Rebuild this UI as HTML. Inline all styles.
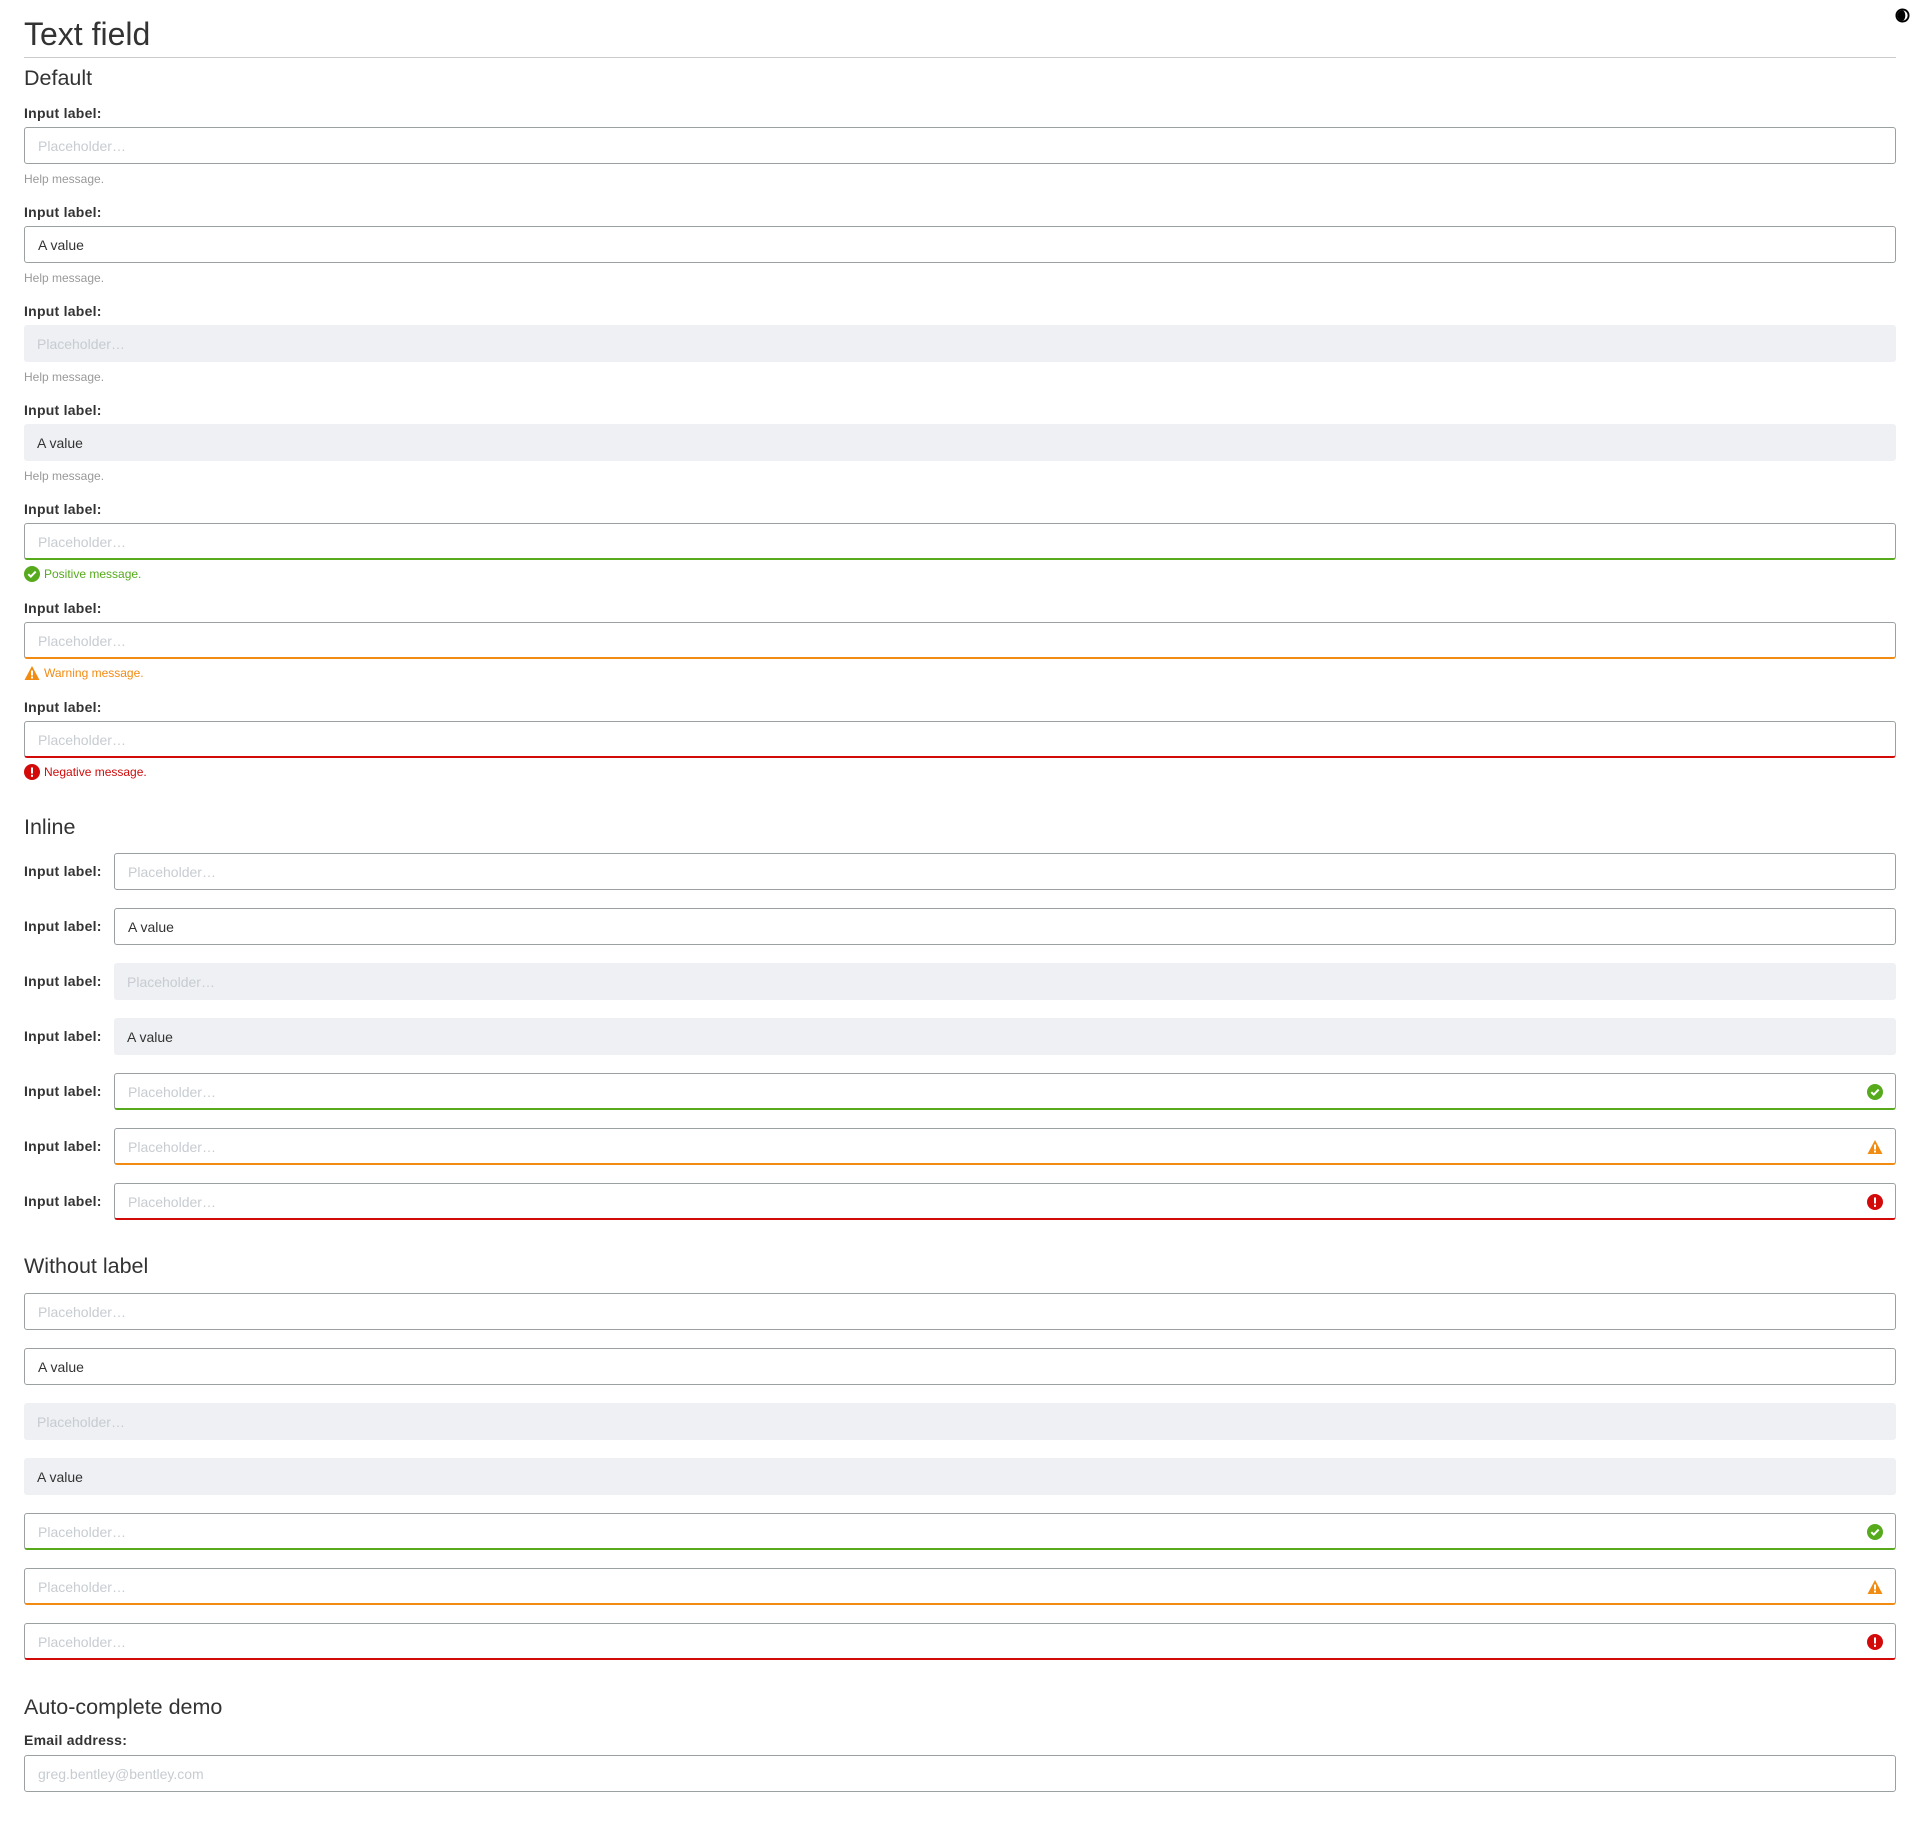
<!DOCTYPE html>
<html><head><meta charset="utf-8">
<style>
html,body{margin:0;padding:0;background:#fff;}
body{width:1920px;height:1831px;position:relative;font-family:"Liberation Sans",Arial,sans-serif;color:#333;overflow:hidden;}
.a{position:absolute;}
h1{position:absolute;margin:0;left:24px;top:14px;font-size:32px;font-weight:normal;color:#333;line-height:40px;}
.hr{position:absolute;left:24px;width:1872px;top:57px;height:1px;background:#ccc;}
h2{position:absolute;margin:0;left:24px;font-size:21.5px;font-weight:normal;color:#333;line-height:28px;}
.lbl{position:absolute;left:24px;font-size:14px;font-weight:bold;color:#333;line-height:18px;letter-spacing:0.25px;}
.in{position:absolute;left:24px;width:1872px;height:37px;box-sizing:border-box;border:1px solid #9ba0a3;border-radius:3px;background:#fff;font-size:14px;line-height:37px;padding-left:13px;color:#c7ccd1;}
.in.v{color:#333;}
.in.d{border:none;background:#eef0f3;line-height:39px;padding-left:13px;}
.in.inl{left:114px;width:1782px;}
.in.g{border-bottom:2px solid #56aa1c;}
.in.o{border-bottom:2px solid #f18b12;}
.in.r{border-bottom:2px solid #d30a0a;}
.help{position:absolute;left:24px;font-size:12px;color:#999;line-height:14px;}
.msg{position:absolute;left:24px;font-size:12px;line-height:16px;display:flex;align-items:center;}
.msg svg{margin-right:4px;}
.ic{position:absolute;right:12px;top:10px;}
</style></head><body>
<h1>Text field</h1>
<svg class="a" style="left:1895px;top:8px" width="15" height="15" viewBox="0 0 16 16"><circle cx="8" cy="8" r="6.5" fill="#fff" stroke="#000" stroke-width="2"/><path d="M8 2.5A5.5 5.5 0 0 0 8 13.5A3 5.5 0 0 0 8 2.5Z" fill="#000"/></svg>
<div class="hr"></div>
<h2 style="top:64px">Default</h2>

<div class="lbl" style="top:104px">Input label:</div>
<div class="in" style="top:127px">Placeholder…</div>
<div class="help" style="top:172px">Help message.</div>

<div class="lbl" style="top:203px">Input label:</div>
<div class="in v" style="top:226px">A value</div>
<div class="help" style="top:271px">Help message.</div>

<div class="lbl" style="top:302px">Input label:</div>
<div class="in d" style="top:325px">Placeholder…</div>
<div class="help" style="top:370px">Help message.</div>

<div class="lbl" style="top:401px">Input label:</div>
<div class="in d v" style="top:424px">A value</div>
<div class="help" style="top:469px">Help message.</div>

<div class="lbl" style="top:500px">Input label:</div>
<div class="in g" style="top:523px">Placeholder…</div>
<div class="msg" style="top:566px;color:#56aa1c"><svg width="16" height="16" viewBox="0 0 16 16"><circle cx="8" cy="8" r="8" fill="#56aa1c"/><path d="M4.3 8.2l2.5 2.4 4.9-5" fill="none" stroke="#fff" stroke-width="2"/></svg>Positive message.</div>

<div class="lbl" style="top:599px">Input label:</div>
<div class="in o" style="top:622px">Placeholder…</div>
<div class="msg" style="top:665px;color:#f18b12"><svg width="16" height="16" viewBox="0 0 16 16"><path d="M8 1L15.5 15H.5Z" fill="#f18b12"/><rect x="7" y="5.5" width="2" height="5" fill="#fff"/><rect x="7" y="11.5" width="2" height="2" fill="#fff"/></svg>Warning message.</div>

<div class="lbl" style="top:698px">Input label:</div>
<div class="in r" style="top:721px">Placeholder…</div>
<div class="msg" style="top:764px;color:#d30a0a"><svg width="16" height="16" viewBox="0 0 16 16"><circle cx="8" cy="8" r="8" fill="#d30a0a"/><rect x="7" y="3.5" width="2" height="6" fill="#fff"/><rect x="7" y="10.8" width="2" height="2" fill="#fff"/></svg>Negative message.</div>

<h2 style="top:813px">Inline</h2>
<div class="lbl" style="top:862px">Input label:</div>
<div class="in inl" style="top:853px">Placeholder…</div>
<div class="lbl" style="top:917px">Input label:</div>
<div class="in inl v" style="top:908px">A value</div>
<div class="lbl" style="top:972px">Input label:</div>
<div class="in inl d" style="top:963px">Placeholder…</div>
<div class="lbl" style="top:1027px">Input label:</div>
<div class="in inl d v" style="top:1018px">A value</div>
<div class="lbl" style="top:1082px">Input label:</div>
<div class="in inl g" style="top:1073px">Placeholder…<svg class="ic" width="16" height="16" viewBox="0 0 16 16"><circle cx="8" cy="8" r="8" fill="#56aa1c"/><path d="M4.3 8.2l2.5 2.4 4.9-5" fill="none" stroke="#fff" stroke-width="2"/></svg></div>
<div class="lbl" style="top:1137px">Input label:</div>
<div class="in inl o" style="top:1128px">Placeholder…<svg class="ic" width="16" height="16" viewBox="0 0 16 16"><path d="M8 1L15.5 15H.5Z" fill="#f18b12"/><rect x="7" y="5.5" width="2" height="5" fill="#fff"/><rect x="7" y="11.5" width="2" height="2" fill="#fff"/></svg></div>
<div class="lbl" style="top:1192px">Input label:</div>
<div class="in inl r" style="top:1183px">Placeholder…<svg class="ic" width="16" height="16" viewBox="0 0 16 16"><circle cx="8" cy="8" r="8" fill="#d30a0a"/><rect x="7" y="3.5" width="2" height="6" fill="#fff"/><rect x="7" y="10.8" width="2" height="2" fill="#fff"/></svg></div>

<h2 style="top:1252px">Without label</h2>
<div class="in" style="top:1293px">Placeholder…</div>
<div class="in v" style="top:1348px">A value</div>
<div class="in d" style="top:1403px">Placeholder…</div>
<div class="in d v" style="top:1458px">A value</div>
<div class="in g" style="top:1513px">Placeholder…<svg class="ic" width="16" height="16" viewBox="0 0 16 16"><circle cx="8" cy="8" r="8" fill="#56aa1c"/><path d="M4.3 8.2l2.5 2.4 4.9-5" fill="none" stroke="#fff" stroke-width="2"/></svg></div>
<div class="in o" style="top:1568px">Placeholder…<svg class="ic" width="16" height="16" viewBox="0 0 16 16"><path d="M8 1L15.5 15H.5Z" fill="#f18b12"/><rect x="7" y="5.5" width="2" height="5" fill="#fff"/><rect x="7" y="11.5" width="2" height="2" fill="#fff"/></svg></div>
<div class="in r" style="top:1623px">Placeholder…<svg class="ic" width="16" height="16" viewBox="0 0 16 16"><circle cx="8" cy="8" r="8" fill="#d30a0a"/><rect x="7" y="3.5" width="2" height="6" fill="#fff"/><rect x="7" y="10.8" width="2" height="2" fill="#fff"/></svg></div>

<h2 style="top:1693px">Auto-complete demo</h2>
<div class="lbl" style="top:1731px">Email address:</div>
<div class="in" style="top:1755px">greg.bentley@bentley.com</div>
</body></html>
